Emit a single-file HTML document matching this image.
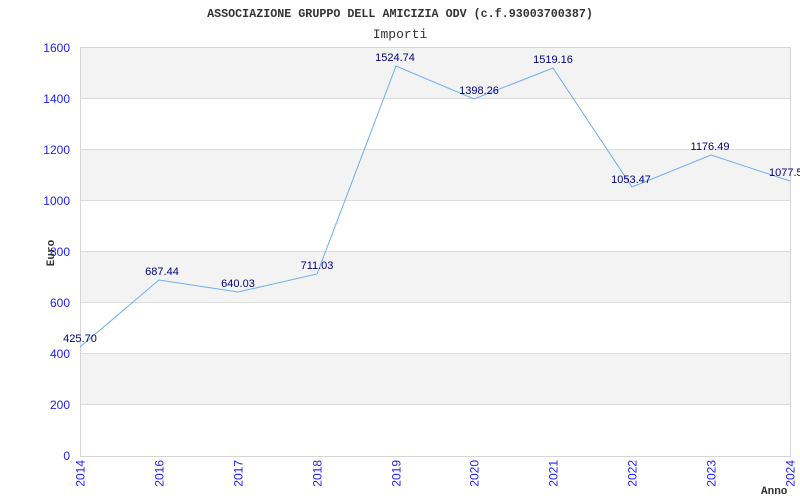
<!DOCTYPE html>
<html><head><meta charset="utf-8"><style>
body{margin:0;background:#fff;width:800px;height:500px;overflow:hidden}
</style></head><body>
<svg width="800" height="500" xmlns="http://www.w3.org/2000/svg" style="display:block">
<rect x="80.5" y="47.5" width="710" height="51" fill="#f3f3f3"/>
<rect x="80.5" y="149.5" width="710" height="51" fill="#f3f3f3"/>
<rect x="80.5" y="251.5" width="710" height="51" fill="#f3f3f3"/>
<rect x="80.5" y="353.5" width="710" height="51" fill="#f3f3f3"/>
<g stroke="#dcdcdc" stroke-width="1">
<line x1="80" y1="98.5" x2="790" y2="98.5"/>
<line x1="80" y1="149.5" x2="790" y2="149.5"/>
<line x1="80" y1="200.5" x2="790" y2="200.5"/>
<line x1="80" y1="251.5" x2="790" y2="251.5"/>
<line x1="80" y1="302.5" x2="790" y2="302.5"/>
<line x1="80" y1="353.5" x2="790" y2="353.5"/>
<line x1="80" y1="404.5" x2="790" y2="404.5"/>
</g>
<rect x="80.5" y="47.5" width="710" height="409" fill="none" stroke="#d6d6d6"/>
<polyline fill="none" stroke="#6aaef0" stroke-width="1" points="80,347 159,280 238,292 317,274 396,66 474,99 553,68 632,187 711,155 790,181"/>
<g font-family="Liberation Sans, sans-serif" font-size="11" fill="#000080" text-anchor="middle">
<text x="80" y="342">425.70</text>
<text x="162" y="275">687.44</text>
<text x="238" y="287">640.03</text>
<text x="317" y="269">711.03</text>
<text x="395" y="61">1524.74</text>
<text x="479" y="94">1398.26</text>
<text x="553" y="63">1519.16</text>
<text x="631" y="183">1053.47</text>
<text x="710" y="150">1176.49</text>
<text x="769" y="176" text-anchor="start">1077.5</text>
</g>
<g font-family="Liberation Sans, sans-serif" font-size="12" fill="#2020ff" text-anchor="end">
<text x="70" y="52">1600</text>
<text x="70" y="103">1400</text>
<text x="70" y="154">1200</text>
<text x="70" y="205">1000</text>
<text x="70" y="256">800</text>
<text x="70" y="307">600</text>
<text x="70" y="358">400</text>
<text x="70" y="409">200</text>
<text x="70" y="460">0</text>
</g>
<g font-family="Liberation Sans, sans-serif" font-size="12" fill="#2020ff" text-anchor="end">
<text transform="translate(84.5,460) rotate(-90)">2014</text>
<text transform="translate(163.5,460) rotate(-90)">2016</text>
<text transform="translate(242.5,460) rotate(-90)">2017</text>
<text transform="translate(321.5,460) rotate(-90)">2018</text>
<text transform="translate(400.5,460) rotate(-90)">2019</text>
<text transform="translate(478.5,460) rotate(-90)">2020</text>
<text transform="translate(557.5,460) rotate(-90)">2021</text>
<text transform="translate(636.5,460) rotate(-90)">2022</text>
<text transform="translate(715.5,460) rotate(-90)">2023</text>
<text transform="translate(794.5,460) rotate(-90)">2024</text>
</g>
<text x="400" y="17" font-family="Liberation Mono, monospace" font-size="11.7" font-weight="bold" fill="#333" text-anchor="middle">ASSOCIAZIONE GRUPPO DELL AMICIZIA ODV (c.f.93003700387)</text>
<text x="400" y="38" font-family="Liberation Mono, monospace" font-size="13" fill="#333" text-anchor="middle">Importi</text>
<text transform="translate(54,253) rotate(-90)" font-family="Liberation Mono, monospace" font-size="11" font-weight="bold" fill="#333" text-anchor="middle">Euro</text>
<text x="761" y="494" font-family="Liberation Mono, monospace" font-size="11" font-weight="bold" fill="#333">Anno</text>
</svg>
</body></html>
